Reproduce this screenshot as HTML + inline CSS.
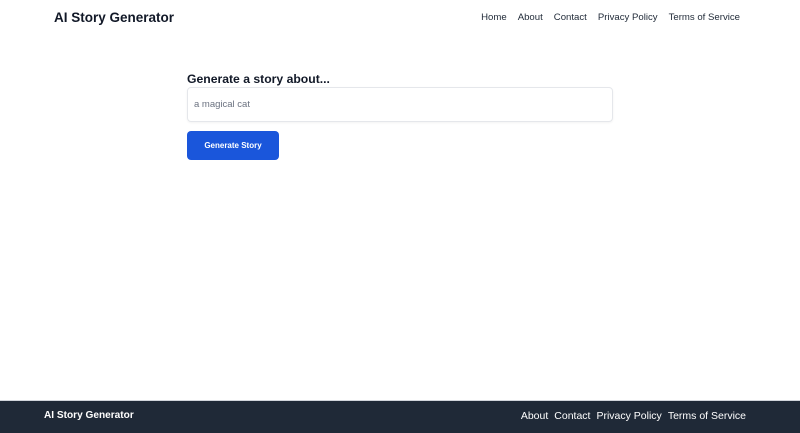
<!DOCTYPE html>
<html><head><style>
*{margin:0;padding:0;box-sizing:border-box}
body{width:800px;height:433px;position:relative;background:#fff;font-family:"Liberation Sans",sans-serif;color:#111827;overflow:hidden}
.t{position:absolute;white-space:nowrap}
</style></head><body>
<div class="t" style="left:54px;top:10px;font-size:13.5px;font-weight:bold">AI Story Generator</div>
<div class="t" style="right:60px;top:12px;font-size:9.6px;color:#1f2937">
<span>Home</span><span style="margin-left:11px">About</span><span style="margin-left:11px">Contact</span><span style="margin-left:11px">Privacy Policy</span><span style="margin-left:11px">Terms of Service</span></div>
<div class="t" style="left:187px;top:72px;font-size:12.2px;font-weight:bold">Generate a story about...</div>
<div style="position:absolute;left:187px;top:87px;width:426px;height:35px;border:1px solid #e5e7eb;border-radius:4px;box-shadow:0 1px 2px rgba(0,0,0,.05)"></div>
<div class="t" style="left:194px;top:99px;font-size:9.5px;color:#6b7280">a magical cat</div>
<div style="position:absolute;left:187px;top:131px;width:92px;height:29px;background:#1a56db;border-radius:4px;color:#fff;font-size:8px;font-weight:bold;text-align:center;line-height:30px">Generate Story</div>
<div style="position:absolute;left:0;top:400px;width:800px;height:33px;background:#1f2937;border-top:1px solid #d1d5db"></div>
<div class="t" style="left:44px;top:410px;font-size:10.1px;font-weight:bold;color:#fff">AI Story Generator</div>
<div class="t" style="right:54px;top:410px;font-size:10.5px;color:#fff"><span>About</span><span style="margin-left:6px">Contact</span><span style="margin-left:6px">Privacy Policy</span><span style="margin-left:6px">Terms of Service</span></div>
</body></html>
